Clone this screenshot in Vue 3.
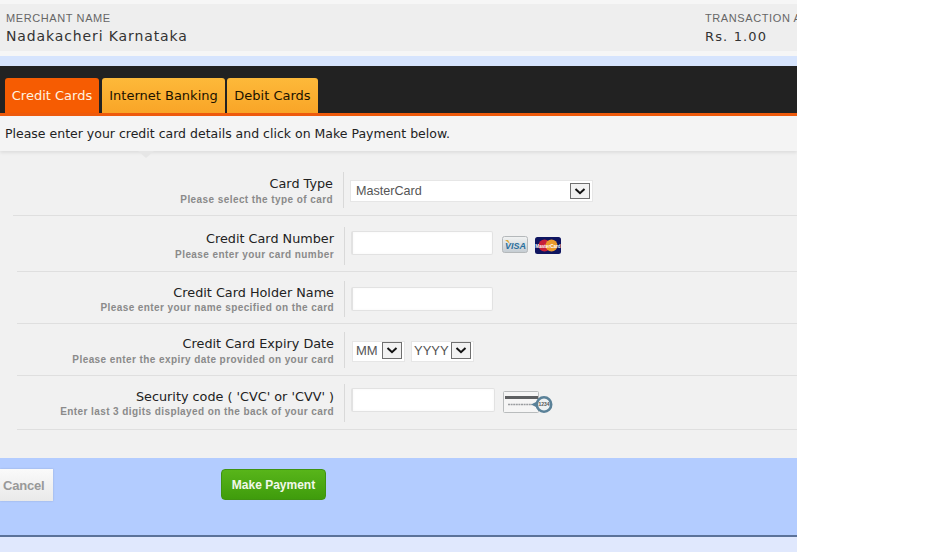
<script setup>
const tabs = [
  { label: 'Credit Cards', active: true, width: '94px' },
  { label: 'Internet Banking', active: false, width: '123px' },
  { label: 'Debit Cards', active: false, width: '91px' }
]
</script>

<template>
  <div class="page">
    <header class="merchant">
      <div>
        <div class="cap">MERCHANT NAME</div>
        <div class="val">Nadakacheri Karnataka</div>
      </div>
      <div class="txn">
        <div class="cap">TRANSACTION AMOUNT</div>
        <div class="val amount">Rs. 1.00</div>
      </div>
    </header>
    <div class="gap-band"></div>
    <nav class="tabbar">
      <div
        v-for="t in tabs"
        :key="t.label"
        class="tab"
        :class="{ active: t.active }"
        :style="{ width: t.width }"
      >{{ t.label }}</div>
    </nav>
    <div class="intro">Please enter your credit card details and click on Make Payment below.<span class="notch"></span></div>

    <main class="form">
      <section class="row r1">
        <div class="label l1"><b>Card Type</b><small>Please select the type of card</small></div>
        <div class="field">
          <div class="select wide">MasterCard<span class="arrow"><svg width="12" height="7" viewBox="0 0 12 7"><path d="M1.5 1 6 5.2 10.5 1" fill="none" stroke="#111" stroke-width="2"/></svg></span></div>
        </div>
      </section>

      <section class="row r2">
        <div class="label"><b>Credit Card Number</b><small>Please enter your card number</small></div>
        <div class="field">
          <input class="input" type="text" />
          <svg class="visa" width="26" height="17" viewBox="0 0 26 17">
            <defs><linearGradient id="vg" x1="0" y1="0" x2="0" y2="1"><stop offset="0" stop-color="#f2f3f3"/><stop offset="1" stop-color="#c4ccd2"/></linearGradient></defs>
            <rect x=".5" y=".5" width="25" height="16" rx="2" fill="url(#vg)" stroke="#b4b8ba"/>
            <path d="M3 4h3l2 4z" fill="#e0ab3c"/>
            <text x="13.5" y="12.5" text-anchor="middle" class="visa-text">VISA</text>
          </svg>
          <svg class="mc" width="26" height="17" viewBox="0 0 26 17">
            <rect width="26" height="17" rx="2.5" fill="#0f1560"/>
            <circle cx="9.5" cy="8.5" r="6" fill="#c8203a"/>
            <circle cx="16.5" cy="8.5" r="6" fill="#eb9b2c"/>
            <text x="13" y="10.8" text-anchor="middle" class="mc-text">MasterCard</text>
          </svg>
        </div>
      </section>

      <section class="row r3">
        <div class="label"><b>Credit Card Holder Name</b><small>Please enter your name specified on the card</small></div>
        <div class="field"><input class="input" type="text" /></div>
      </section>

      <section class="row r4">
        <div class="label"><b>Credit Card Expiry Date</b><small>Please enter the expiry date provided on your card</small></div>
        <div class="field">
          <div class="select mm">MM<span class="arrow"><svg width="12" height="7" viewBox="0 0 12 7"><path d="M1.5 1 6 5.2 10.5 1" fill="none" stroke="#111" stroke-width="2"/></svg></span></div>
          <div class="select yy">YYYY<span class="arrow"><svg width="12" height="7" viewBox="0 0 12 7"><path d="M1.5 1 6 5.2 10.5 1" fill="none" stroke="#111" stroke-width="2"/></svg></span></div>
        </div>
      </section>

      <section class="row r5">
        <div class="label"><b>Security code ( 'CVC' or 'CVV' )</b><small>Enter last 3 digits displayed on the back of your card</small></div>
        <div class="field">
          <input class="input cvv" type="text" />
          <svg class="cvv-icon" width="51" height="24" viewBox="0 0 51 24">
            <rect x=".5" y=".5" width="35" height="21" rx="1" fill="#f5f5f5" stroke="#b9bcbd"/>
            <rect x="2" y="5" width="33" height="3" fill="#5d5f61"/>
            <path d="M5 13.5h24" stroke="#9a9da0" stroke-width="1.5" stroke-dasharray="2 .6"/>
            <path d="M28 13.5 35 10v7z" fill="#5a8198"/>
            <circle cx="41" cy="13.5" r="7.2" fill="#eef1f2" stroke="#5a8198" stroke-width="2.6"/>
            <text x="41" y="15.2" text-anchor="middle" class="cvv-text">1234</text>
          </svg>
        </div>
      </section>
    </main>

    <footer class="actions">
      <button class="cancel" type="button">Cancel</button>
      <button class="pay" type="button">Make Payment</button>
    </footer>
    <div class="bottom"></div>
  </div>
</template>

<style>
html, body { background: #fff; margin: 0; }
</style>

<style scoped>
.page {
  width: 797px;
  height: 552px;
  box-sizing: border-box;
  padding-top: 4px;
  overflow: hidden;
  font-family: "DejaVu Sans", Verdana, sans-serif;
  background: #f6f6f6;
}
.merchant {
  height: 47px;
  box-sizing: border-box;
  padding: 8px 0 0 6px;
  margin-bottom: 5px;
  background: #eeeeee;
  display: flex;
  justify-content: space-between;
}
.cap {
  font-size: 11px;
  line-height: 13px;
  color: #666;
  white-space: nowrap;
  font-family: "Liberation Sans", Arial, sans-serif;
  letter-spacing: .6px;
}
.val {
  font-size: 14px;
  line-height: 22px;
  color: #333;
  white-space: nowrap;
  letter-spacing: .88px;
}
.txn { width: 92px; overflow: hidden; }
.amount { font-size: 13px; letter-spacing: 1.15px; margin-top: 1px; }
.gap-band { height: 10px; background: #d6e4fd; }
.tabbar {
  height: 47px;
  box-sizing: border-box;
  background: #222;
  display: flex;
  gap: 3px;
  align-items: flex-end;
  padding-left: 5px;
}
.tab {
  height: 35px;
  border-radius: 3px 3px 0 0;
  background: linear-gradient(#fdb93a, #f9a527);
  color: #1a1200;
  font-size: 13px;
  line-height: 35px;
  text-align: center;
  white-space: nowrap;
}
.tab:nth-child(3) { margin-left: -1px; }
.tab.active { background: #f65c02; color: #fff3e0; }
.intro {
  position: relative;
  border-top: 3px solid #ee5a0c;
  height: 35px;
  background: #f4f4f4;
  font-size: 12.5px;
  line-height: 36px;
  padding-left: 5px;
  color: #222;
  box-shadow: 0 2px 3px rgba(0,0,0,.08);
  z-index: 1;
  white-space: nowrap;
}
.notch {
  position: absolute;
  left: 138px;
  bottom: -7px;
  width: 0;
  height: 0;
  border-left: 8px solid transparent;
  border-right: 8px solid transparent;
  border-top: 7px solid #e6e6e6;
}
.form {
  height: 307px;
  box-sizing: border-box;
  padding-top: 19px;
  background: #f1f1f1;
}
.row {
  display: flex;
  box-sizing: border-box;
  margin-left: 17px;
  border-bottom: 1px solid #dfdfdf;
}
.r1 { height: 46px; margin-left: 13px; padding-top: 6px; }
.r2 { height: 56px; padding-top: 15px; }
.r3 { height: 52px; padding-top: 13px; }
.r4 { height: 52px; padding-top: 12px; }
.r5 { height: 54px; padding-top: 13px; }
.label {
  width: 317px;
  display: flex;
  flex-direction: column;
  align-items: flex-end;
  gap: 2px;
  text-align: right;
  white-space: nowrap;
}
.l1 { width: 320px; }
.r3 .label { gap: 1px; }
.r5 .label { gap: 1px; }
.label b {
  font-weight: 400;
  font-size: 12.8px;
  line-height: 15px;
  color: #222;
}
.label small {
  font-size: 10px;
  line-height: 14px;
  font-weight: 700;
  font-family: "Liberation Sans", Arial, sans-serif;
  letter-spacing: .42px;
  color: #8a8a8a;
}
.field {
  margin: -4px 0 0 10px;
  border-left: 1px solid #d9d9d9;
  box-sizing: border-box;
  height: 36px;
  padding: 4px 0 0 6px;
  display: flex;
  align-items: flex-start;
  flex: 1;
}
.r1 .field { padding-top: 8px; }
.r2 .field { height: 38px; }
.r3 .field { padding-top: 6px; }
.r4 .field { padding: 9px 0 0 7px; }
.r5 .field { height: 38px; margin-top: -5px; }
.input {
  width: 142px;
  height: 24px;
  box-sizing: border-box;
  margin: 0;
  padding: 0;
  border: 1px solid #e2e2e2;
  border-left-width: 2px;
  border-radius: 2px;
  background: #fff;
  box-shadow: inset 0 0 3px rgba(0,0,0,.04);
}
.cvv { width: 144px; }
.visa { margin: 5px 0 0 9px; }
.mc { margin: 6px 0 0 7px; }
.cvv-icon { margin: 3px 0 0 8px; }
.visa-text {
  font: italic 700 9px "Liberation Sans", Arial, sans-serif;
  fill: #2a6f9c;
}
.mc-text {
  font: 700 4.6px "Liberation Sans", Arial, sans-serif;
  fill: #fff;
}
.cvv-text {
  font: 700 5px "Liberation Sans", Arial, sans-serif;
  fill: #555;
}
.select {
  position: relative;
  box-sizing: border-box;
  background: #fff;
  border: 1px solid #e6e6e6;
  color: #555;
  font-family: "Liberation Sans", Arial, sans-serif;
  white-space: nowrap;
}
.wide {
  width: 243px;
  height: 22px;
  font-size: 12.6px;
  line-height: 20px;
  padding-left: 5px;
}
.arrow {
  position: absolute;
  right: 2px;
  top: 2px;
  width: 20px;
  height: 16px;
  box-sizing: border-box;
  border: 1px solid #6f6f6f;
  background: #f1f1f1;
  display: flex;
  align-items: center;
  justify-content: center;
}
.mm, .yy {
  height: 21px;
  font-size: 13px;
  line-height: 17px;
  padding-left: 3px;
}
.yy { padding-left: 2px; }
.mm { width: 53px; }
.yy { width: 63px; margin-left: 6px; }
.mm .arrow, .yy .arrow { top: 0; height: 17px; }
.actions {
  height: 77px;
  box-sizing: border-box;
  background: #b3ccff;
  display: flex;
  align-items: flex-start;
  padding-top: 10px;
}
.cancel {
  width: 53px;
  height: 32px;
  margin: 1px 0 0;
  padding: 0 0 0 3px;
  border: 0;
  background: linear-gradient(#fafafa, #e9e9e9);
  color: #999;
  font: 700 13px "Liberation Sans", Arial, sans-serif;
  letter-spacing: -.2px;
  text-align: left;
  box-shadow: 0 0 2px rgba(0,0,0,.15);
}
.pay {
  margin: 1px 0 0 168px;
  width: 105px;
  height: 31px;
  padding: 0;
  border: 1px solid #3f9311;
  border-radius: 4px;
  background: linear-gradient(#58b51a, #3f9c0c);
  color: #f2f8ea;
  font: 700 12px "Liberation Sans", Arial, sans-serif;
}
.bottom {
  height: 17px;
  box-sizing: border-box;
  background: #e0e8fd;
  border-top: 2px solid #5b7299;
}
</style>
